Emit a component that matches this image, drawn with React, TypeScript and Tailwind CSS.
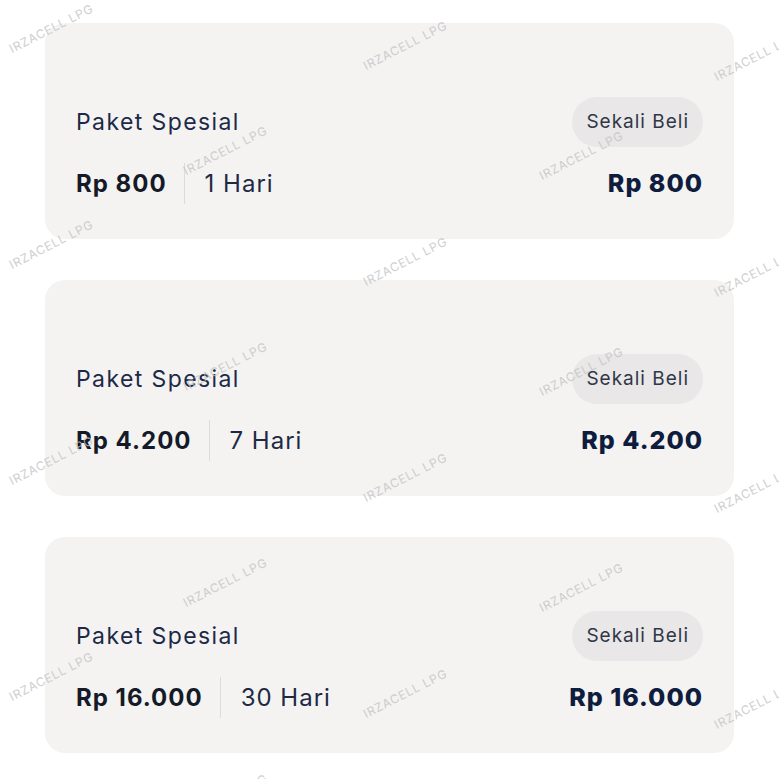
import React from "react";

const plans = [
  { price: "Rp 800", days: "1 Hari" },
  { price: "Rp 4.200", days: "7 Hari" },
  { price: "Rp 16.000", days: "30 Hari" },
];

// watermark stamp origins (bottom-left of the text), staggered lattice
const stampsA = [
  { x: 13, y: 55 },
  { x: 367, y: 72 },
  { x: 718, y: 83 },
];
const stampsB = [
  { x: 187, y: 177 },
  { x: 543, y: 182 },
];

const marks: { x: number; y: number }[] = [];
for (let r = 0; r < 4; r++) {
  stampsA.forEach((s) => marks.push({ x: s.x, y: s.y + r * 216 }));
  stampsB.forEach((s) => marks.push({ x: s.x, y: s.y + r * 216 }));
}

function PlanCard({ price, days }: { price: string; days: string }) {
  return (
    <div className="h-[216px] rounded-[20px] bg-[#f4f3f2] px-[31px] pt-[74px] flex justify-between">
      <div className="flex flex-col">
        <div className="h-[50px] flex items-center text-[23px] tracking-[1.4px] text-[#1c2a48]">
          Paket Spesial
        </div>
        <div className="mt-4 h-[41px] flex items-center">
          <span className="text-[24px] font-bold tracking-[1px] text-[#141a27]">{price}</span>
          <span className="ml-[17px] mr-[20px] w-px h-[41px] bg-[#dedcdb]" />
          <span className="text-[24px] tracking-[1px] text-[#1e2a45]">{days}</span>
        </div>
      </div>
      <div className="flex flex-col items-end">
        <div className="h-[50px] px-[14px] rounded-full bg-[#e9e7e7] flex items-center text-[19px] tracking-[1px] text-[#2f3747]">
          Sekali Beli
        </div>
        <div className="mt-4 h-[41px] flex items-center text-[25px] font-extrabold tracking-[1px] text-[#0e1c3d]">
          {price}
        </div>
      </div>
    </div>
  );
}

export default function App() {
  return (
    <div
      className="relative w-[779px] h-[779px] overflow-hidden bg-white"
      style={{ fontFamily: "Inter, 'Noto Sans', sans-serif" }}
    >
      <div className="px-[45px] pt-[23px] flex flex-col gap-[41px]">
        {plans.map((p) => (
          <PlanCard key={p.price} price={p.price} days={p.days} />
        ))}
      </div>

      {/* watermark overlay */}
      <div className="pointer-events-none absolute inset-0">
        {marks.map((m, i) => (
          <span
            key={i}
            className="absolute whitespace-nowrap text-[12px] leading-none tracking-[0.8px] text-[#c4c4c4] opacity-80 origin-bottom-left -rotate-[27deg]"
            style={{ left: m.x, top: m.y - 12 }}
          >
            IRZACELL LPG
          </span>
        ))}
      </div>
    </div>
  );
}
